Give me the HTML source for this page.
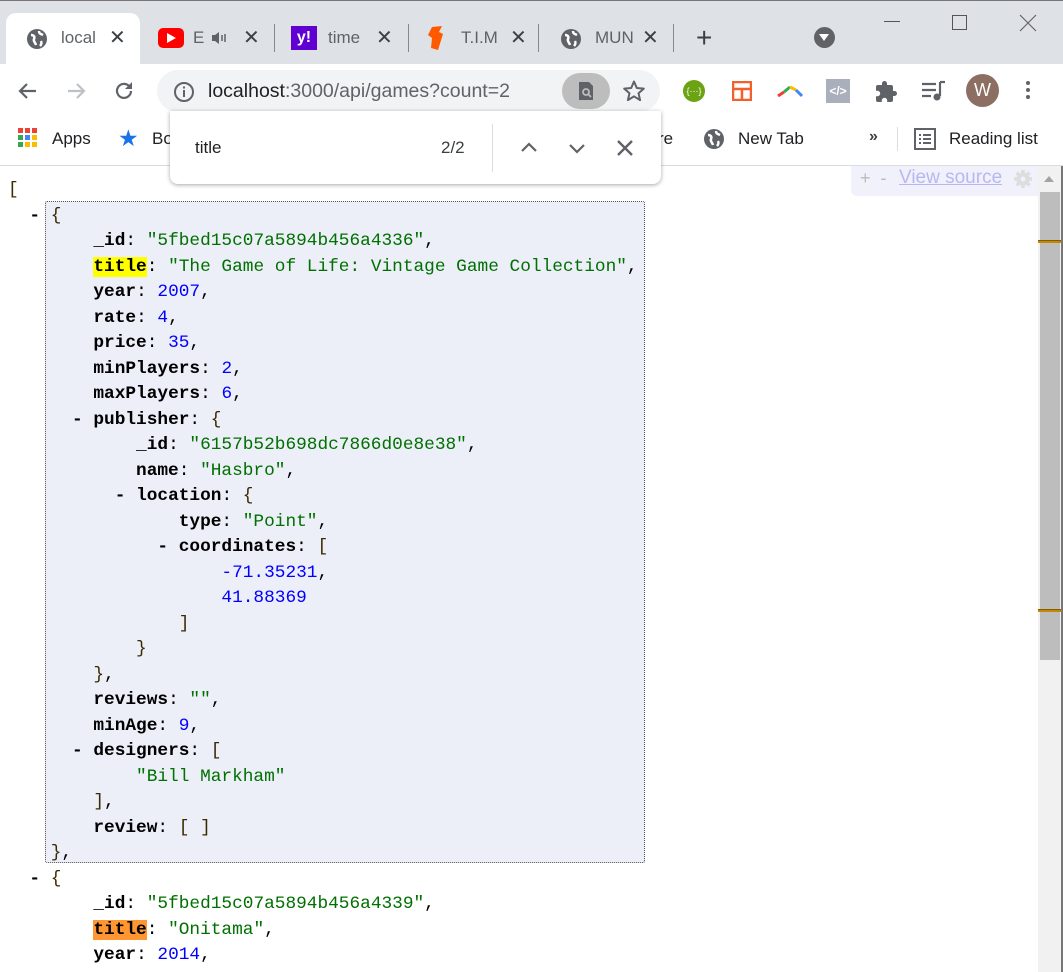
<!DOCTYPE html>
<html><head><meta charset="utf-8"><style>
*{margin:0;padding:0;box-sizing:border-box}
body{width:1063px;height:972px;overflow:hidden;background:#fff;font-family:"Liberation Sans",sans-serif;position:relative}
.a{position:absolute}
.tabbar{left:0;top:0;width:1063px;height:64px;background:#dee1e6;border-top:1px solid #777}
.tt{font-size:17px;color:#5f6368;top:28px}
.x{font-size:20px;color:#3c4043;top:25px}
.sep{width:1px;height:28px;background:#888;top:24px}
.toolbar{left:0;top:64px;width:1063px;height:56px;background:#fff}
.omni{left:157px;top:70px;width:503px;height:42px;background:#f1f3f4;border-radius:21px}
.bm{left:0;top:120px;width:1063px;height:46px;background:#fff;border-bottom:1px solid #dadce0}
.bmt{font-size:17px;color:#202124;top:129px}
pre{font-family:"Liberation Mono",monospace;font-size:17.8px;line-height:25.5px;position:absolute;left:8px;top:178px;color:#000}
.k{font-weight:bold}
.s{color:#007000}
.n{color:#0000ff}
.b{color:#3a2a00}
.hy{background:#ffff00}
.ho{background:#ff9632}
</style></head><body>
<div class="a tabbar"></div>
<div class="a" style="left:6px;top:13px;width:134px;height:52px;background:#fff;border-radius:10px 10px 0 0"></div>
<svg class="a" style="left:26px;top:28px" width="22" height="22" viewBox="0 0 22 22"><circle cx="11" cy="11" r="10" fill="#5f6368"/><path d="M5 7c3 0 4 2 3 4s1 3 2 6M13 3c0 3 2 3 4 4M15 13c1 2 0 4-1 5" stroke="#fff" stroke-width="2.5" fill="none"/></svg>
<div class="a tt" style="left:61px">local</div>
<div class="a x" style="left:109px">✕</div>
<div class="a" style="left:158px;top:28px;width:26px;height:20px;background:#f00;border-radius:5px"></div>
<div class="a" style="left:167px;top:33px;width:0;height:0;border-left:9px solid #fff;border-top:5px solid transparent;border-bottom:5px solid transparent"></div>
<div class="a tt" style="left:193px">E</div>
<svg class="a" style="left:210px;top:30px" width="18" height="16"><path d="M2 5h3l4-3v12l-4-3H2z" fill="#5f6368"/><path d="M12 5v6M15 4v8" stroke="#5f6368" stroke-width="1.5"/></svg>
<div class="a x" style="left:243px">✕</div>
<div class="a sep" style="left:274px"></div>
<div class="a" style="left:291px;top:26px;width:26px;height:24px;background:#6001d2;color:#fff;font-weight:bold;font-size:16px;text-align:center;line-height:24px">y!</div>
<div class="a tt" style="left:328px">time</div>
<div class="a x" style="left:376px">✕</div>
<div class="a sep" style="left:408px"></div>
<svg class="a" style="left:426px;top:25px" width="20" height="26"><path d="M6 2l10-1-3 6 4 2-5 16-7-2 1-10-4-3z" fill="#ff5a00"/></svg>
<div class="a tt" style="left:461px">T.I.M</div>
<div class="a x" style="left:510px">✕</div>
<div class="a sep" style="left:538px"></div>
<svg class="a" style="left:560px;top:28px" width="22" height="22" viewBox="0 0 22 22"><circle cx="11" cy="11" r="10" fill="#5f6368"/><path d="M5 7c3 0 4 2 3 4s1 3 2 6M13 3c0 3 2 3 4 4M15 13c1 2 0 4-1 5" stroke="#fff" stroke-width="2.5" fill="none"/></svg>
<div class="a tt" style="left:595px">MUN</div>
<div class="a x" style="left:642px">✕</div>
<div class="a sep" style="left:673px"></div>
<div class="a" style="left:696px;top:22px;font-size:28px;color:#3c4043">+</div>
<div class="a" style="left:814px;top:27px;width:21px;height:21px;border-radius:50%;background:#5f6368"></div>
<div class="a" style="left:819px;top:34px;border-top:7px solid #fff;border-left:5.5px solid transparent;border-right:5.5px solid transparent"></div>
<div class="a" style="left:884px;top:21px;width:16px;height:1px;background:#555"></div>
<div class="a" style="left:952px;top:15px;width:15px;height:15px;border:1px solid #555"></div>
<svg class="a" style="left:1019px;top:14px" width="18" height="18"><path d="M1 1l16 16M17 1L1 17" stroke="#666" stroke-width="1.2"/></svg>

<div class="a toolbar"></div>
<svg class="a" style="left:16px;top:79px" width="24" height="24"><path d="M20 12H5M11 5l-7 7 7 7" stroke="#5f6368" stroke-width="2.2" fill="none"/></svg>
<svg class="a" style="left:64px;top:79px" width="24" height="24"><path d="M4 12h15M13 5l7 7-7 7" stroke="#bdc1c6" stroke-width="2.2" fill="none"/></svg>
<svg class="a" style="left:112px;top:79px" width="24" height="24"><path d="M19 12a7 7 0 1 1-2-5" stroke="#5f6368" stroke-width="2.2" fill="none"/><path d="M20 3v7h-7z" fill="#5f6368"/></svg>
<div class="a omni"></div>
<svg class="a" style="left:173px;top:81px" width="22" height="22"><circle cx="11" cy="11" r="9" stroke="#5f6368" stroke-width="2" fill="none"/><rect x="10" y="9" width="2" height="7" fill="#5f6368"/><rect x="10" y="5.5" width="2" height="2" fill="#5f6368"/></svg>
<div class="a" style="left:208px;top:80px;font-size:19.5px;color:#202124">localhost<span style="color:#5f6368">:3000/api/games?count=2</span></div>
<div class="a" style="left:562px;top:73px;width:48px;height:36px;border-radius:18px;background:#bdbdbd"></div>
<svg class="a" style="left:577px;top:81px" width="18" height="20"><path d="M2 1h10l4 4v14H2z" fill="#5f6368"/><circle cx="9" cy="11" r="3" stroke="#bdbdbd" stroke-width="1.8" fill="none"/><path d="M11 13l3 3" stroke="#bdbdbd" stroke-width="1.8"/></svg>
<svg class="a" style="left:622px;top:79px" width="24" height="24" viewBox="0 0 24 24"><path d="M12 2.5l2.8 6.5 7 .6-5.3 4.6 1.6 6.9L12 17.4l-6.1 3.7 1.6-6.9-5.3-4.6 7-.6z" fill="none" stroke="#5f6368" stroke-width="2" stroke-linejoin="round"/></svg>
<div class="a" style="left:683px;top:80px;width:22px;height:22px;border-radius:50%;background:#6ba312;color:#fff;font-size:9px;text-align:center;line-height:22px">{···}</div>
<svg class="a" style="left:732px;top:81px" width="20" height="20"><rect x="1" y="1" width="18" height="18" fill="none" stroke="#f5602a" stroke-width="2.5"/><path d="M1 8h18M10 8v11" stroke="#f5602a" stroke-width="2.5"/></svg>
<svg class="a" style="left:777px;top:84px" width="26" height="14"><path d="M1 12l6-4" stroke="#ea4335" stroke-width="3"/><path d="M7 8l6-5" stroke="#34a853" stroke-width="3"/><path d="M13 3l6 3" stroke="#fbbc04" stroke-width="3"/><path d="M19 6l6 6" stroke="#4285f4" stroke-width="3"/></svg>
<div class="a" style="left:826px;top:79px;width:24px;height:24px;background:#aab0bb;color:#fff;font-size:12px;text-align:center;line-height:24px;font-weight:bold">&lt;/&gt;</div>
<svg class="a" style="left:874px;top:80px" width="24" height="24" viewBox="0 0 24 24"><path d="M20.5 11H19V7a2 2 0 0 0-2-2h-4V3.5a2.5 2.5 0 0 0-5 0V5H4a2 2 0 0 0-2 2v3.8h1.5a2.7 2.7 0 0 1 0 5.4H2V20a2 2 0 0 0 2 2h3.8v-1.5a2.7 2.7 0 0 1 5.4 0V22H17a2 2 0 0 0 2-2v-4h1.5a2.5 2.5 0 0 0 0-5z" fill="#5f6368"/></svg>
<svg class="a" style="left:921px;top:80px" width="26" height="22"><path d="M1 4h14M1 10h14M1 16h9" stroke="#5f6368" stroke-width="2.2"/><path d="M19 2v14" stroke="#5f6368" stroke-width="2.2"/><circle cx="16" cy="17" r="3.5" fill="#5f6368"/><path d="M19 2h5" stroke="#5f6368" stroke-width="2.2"/></svg>
<div class="a" style="left:966px;top:74px;width:33px;height:33px;border-radius:50%;background:#8d6e63;color:#fff;font-size:18px;text-align:center;line-height:33px">W</div>
<div class="a" style="left:1026px;top:81px;width:4px;height:4px;border-radius:50%;background:#5f6368;box-shadow:0 7px 0 #5f6368,0 14px 0 #5f6368"></div>

<div class="a bm"></div>
<svg class="a" style="left:18px;top:128px" width="20" height="20"><g fill="#ea4335"><rect x="0" y="0" width="5" height="5"/><rect x="7" y="0" width="5" height="5"/><rect x="14" y="0" width="5" height="5"/></g><g><rect x="0" y="7" width="5" height="5" fill="#34a853"/><rect x="7" y="7" width="5" height="5" fill="#4285f4"/><rect x="14" y="7" width="5" height="5" fill="#fbbc04"/><rect x="0" y="14" width="5" height="5" fill="#34a853"/><rect x="7" y="14" width="5" height="5" fill="#fbbc04"/><rect x="14" y="14" width="5" height="5" fill="#fbbc04"/></g></svg>
<div class="a bmt" style="left:52px">Apps</div>
<div class="a" style="left:118px;top:125px;font-size:23px;color:#1a73e8">★</div>
<div class="a bmt" style="left:152px">Bo</div>
<div class="a bmt" style="left:658px">re</div>
<svg class="a" style="left:703px;top:128px" width="22" height="22" viewBox="0 0 22 22"><circle cx="11" cy="11" r="10" fill="#5f6368"/><path d="M5 7c3 0 4 2 3 4s1 3 2 6M13 3c0 3 2 3 4 4M15 13c1 2 0 4-1 5" stroke="#fff" stroke-width="2.5" fill="none"/></svg>
<div class="a bmt" style="left:738px">New Tab</div>
<div class="a" style="left:869px;top:128px;font-size:16px;color:#3c4043;font-weight:bold">»</div>
<div class="a" style="left:897px;top:127px;width:1px;height:24px;background:#dadce0"></div>
<svg class="a" style="left:914px;top:128px" width="22" height="22"><rect x="1" y="1" width="20" height="20" fill="none" stroke="#5f6368" stroke-width="2"/><path d="M5 7h2M9 7h8M5 11h2M9 11h8M5 15h2M9 15h8" stroke="#5f6368" stroke-width="2"/></svg>
<div class="a bmt" style="left:949px">Reading list</div>

<div class="a" style="left:170px;top:111px;width:491px;height:73px;background:#fff;border-radius:0 0 8px 8px;box-shadow:0 1px 4px rgba(0,0,0,.35)"></div>
<div class="a" style="left:195px;top:138px;font-size:17px;color:#202124">title</div>
<div class="a" style="left:441px;top:138px;font-size:17px;color:#3c4043">2/2</div>
<div class="a" style="left:492px;top:124px;width:1px;height:48px;background:#dadce0"></div>
<svg class="a" style="left:519px;top:138px" width="20" height="20"><path d="M3 13l7-7 7 7" stroke="#5f6368" stroke-width="2.2" fill="none"/></svg>
<svg class="a" style="left:567px;top:138px" width="20" height="20"><path d="M3 7l7 7 7-7" stroke="#5f6368" stroke-width="2.2" fill="none"/></svg>
<svg class="a" style="left:615px;top:138px" width="20" height="20"><path d="M3 3l14 14M17 3L3 17" stroke="#5f6368" stroke-width="2.4"/></svg>

<div class="a" style="left:851px;top:166px;width:187px;height:30px;background:#f1f1fb;border-radius:0 0 0 6px"></div>
<div class="a" style="left:860px;top:168px;font-size:18px;color:#bbb">+&nbsp;&nbsp;-</div>
<div class="a" style="left:899px;top:167px;font-size:19px;color:#b8b8f0;text-decoration:underline">View source</div>
<svg class="a" style="left:1013px;top:169px" width="20" height="20" viewBox="0 0 20 20"><circle cx="10" cy="10" r="6.5" fill="#ddd"/><path d="M10 1v18M1 10h18M3.6 3.6l12.8 12.8M16.4 3.6L3.6 16.4" stroke="#ddd" stroke-width="3.5"/><circle cx="10" cy="10" r="2.5" fill="#f1f1fb"/></svg>

<div class="a" style="left:1038px;top:166px;width:23px;height:806px;background:#f1f1f1"></div>
<div class="a" style="left:1061px;top:166px;width:2px;height:806px;background:#777"></div>
<div class="a" style="left:1044px;top:176px;border-bottom:6px solid #a3a3a3;border-left:5px solid transparent;border-right:5px solid transparent"></div>
<div class="a" style="left:1040px;top:192px;width:20px;height:468px;background:#bdbdbd"></div>
<div class="a" style="left:1038px;top:240px;width:23px;height:3px;background:#c28a00;border-top:1px solid #8a5a00"></div>
<div class="a" style="left:1038px;top:609px;width:23px;height:3px;background:#c28a00;border-top:1px solid #8a5a00"></div>

<div class="a" style="left:45px;top:201px;width:600px;height:662px;background:#eceef8;border:1px dotted #555;border-radius:2px"></div>
<pre><span class="b">[</span>
  <span class="k">-</span> <span class="b">{</span>
        <span class="k">_id</span>: <span class="s">"5fbed15c07a5894b456a4336"</span>,
        <span class="k hy">title</span>: <span class="s">"The Game of Life: Vintage Game Collection"</span>,
        <span class="k">year</span>: <span class="n">2007</span>,
        <span class="k">rate</span>: <span class="n">4</span>,
        <span class="k">price</span>: <span class="n">35</span>,
        <span class="k">minPlayers</span>: <span class="n">2</span>,
        <span class="k">maxPlayers</span>: <span class="n">6</span>,
      <span class="k">-</span> <span class="k">publisher</span>: <span class="b">{</span>
            <span class="k">_id</span>: <span class="s">"6157b52b698dc7866d0e8e38"</span>,
            <span class="k">name</span>: <span class="s">"Hasbro"</span>,
          <span class="k">-</span> <span class="k">location</span>: <span class="b">{</span>
                <span class="k">type</span>: <span class="s">"Point"</span>,
              <span class="k">-</span> <span class="k">coordinates</span>: <span class="b">[</span>
                    <span class="n">-71.35231</span>,
                    <span class="n">41.88369</span>
                <span class="b">]</span>
            <span class="b">}</span>
        <span class="b">}</span>,
        <span class="k">reviews</span>: <span class="s">""</span>,
        <span class="k">minAge</span>: <span class="n">9</span>,
      <span class="k">-</span> <span class="k">designers</span>: <span class="b">[</span>
            <span class="s">"Bill Markham"</span>
        <span class="b">]</span>,
        <span class="k">review</span>: <span class="b">[ ]</span>
    <span class="b">}</span>,
  <span class="k">-</span> <span class="b">{</span>
        <span class="k">_id</span>: <span class="s">"5fbed15c07a5894b456a4339"</span>,
        <span class="k ho">title</span>: <span class="s">"Onitama"</span>,
        <span class="k">year</span>: <span class="n">2014</span>,
</pre>
</body></html>
